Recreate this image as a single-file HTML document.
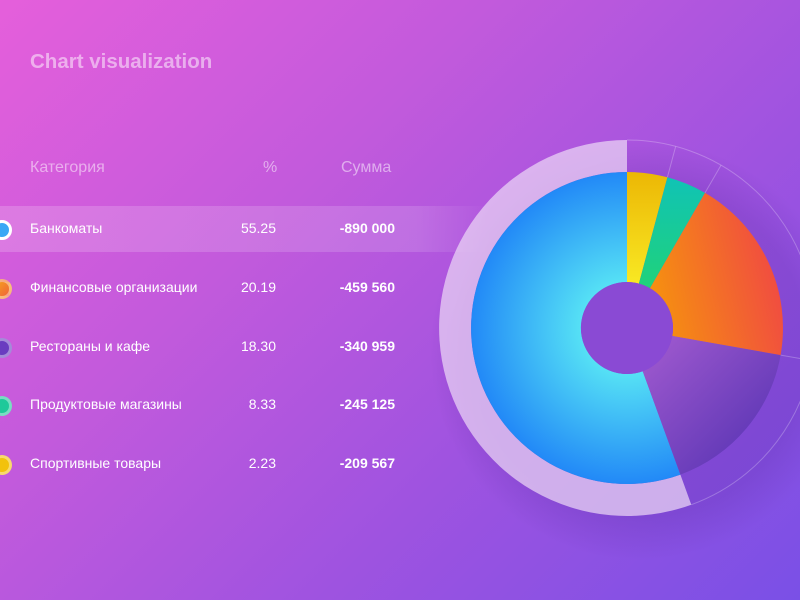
<!DOCTYPE html>
<html><head><meta charset="utf-8"><style>
html,body{margin:0;padding:0}
body{width:800px;height:600px;overflow:hidden;position:relative;font-family:"Liberation Sans",sans-serif;
background:linear-gradient(135deg,#e55fdb 0%,#c25adc 35%,#9f53e0 65%,#7a50e6 100%);}
.t{position:absolute;left:30px;top:50px;font-size:20.5px;font-weight:bold;color:rgba(255,255,255,0.5);}
.h{position:absolute;top:159px;font-size:16px;color:rgba(255,255,255,0.5)}
.hl{position:absolute;left:0;top:206px;width:490px;height:46px;background:linear-gradient(90deg,rgba(255,255,255,0.18),rgba(255,255,255,0.14) 85%,rgba(255,255,255,0))}
.r{position:absolute;left:0;width:400px;height:20px;font-size:14px;color:#fff}
.r span{position:absolute;top:0}
.n{left:30px}.p{right:124px}.s{right:5px;font-weight:bold}
.d{position:absolute;left:-8px;top:0px;width:14px;height:14px;border-radius:50%;border:3px solid rgba(255,255,255,0.4)}
</style></head><body>
<div class="t">Chart visualization</div>
<div class="h" style="left:30px">Категория</div>
<div class="h" style="left:263px">%</div>
<div class="h" style="left:341px">Сумма</div>
<div class="hl"></div>
<div class="r" style="top:220px"><div class="d" style="background:#3aa8f5;border-color:#fff"></div><span class="n">Банкоматы</span><span class="p">55.25</span><span class="s">-890 000</span></div>
<div class="r" style="top:279px"><div class="d" style="background:linear-gradient(135deg,#f6a21c,#f0643a)"></div><span class="n">Финансовые организации</span><span class="p">20.19</span><span class="s">-459 560</span></div>
<div class="r" style="top:338px"><div class="d" style="background:#6a3cc0"></div><span class="n">Рестораны и кафе</span><span class="p">18.30</span><span class="s">-340 959</span></div>
<div class="r" style="top:396px"><div class="d" style="background:#1ec99a"></div><span class="n">Продуктовые магазины</span><span class="p">8.33</span><span class="s">-245 125</span></div>
<div class="r" style="top:455px"><div class="d" style="background:#f2c20c"></div><span class="n">Спортивные товары</span><span class="p">2.23</span><span class="s">-209 567</span></div>
<svg width="800" height="600" style="position:absolute;left:0;top:0">
<defs>
<radialGradient id="bl" cx="627" cy="328" r="156" gradientUnits="userSpaceOnUse"><stop offset="0.3" stop-color="#55e0f5"/><stop offset="1" stop-color="#2289f7"/></radialGradient>
<linearGradient id="ye" x1="0" y1="0" x2="0" y2="1"><stop offset="0" stop-color="#ecb705"/><stop offset="1" stop-color="#f8e823"/></linearGradient>
<linearGradient id="gr" x1="0" y1="0" x2="0" y2="1"><stop offset="0" stop-color="#10c3b5"/><stop offset="1" stop-color="#20d27a"/></linearGradient>
<linearGradient id="or" x1="0" y1="0.6" x2="1" y2="0.3"><stop offset="0" stop-color="#f6910f"/><stop offset="1" stop-color="#f04546"/></linearGradient>
<linearGradient id="pu" x1="0" y1="0" x2="1" y2="1"><stop offset="0" stop-color="#a35bd0"/><stop offset="1" stop-color="#4e2fb0"/></linearGradient>
<radialGradient id="sh" cx="640" cy="350" r="210" gradientUnits="userSpaceOnUse"><stop offset="0.8" stop-color="#4a2090" stop-opacity="0.18"/><stop offset="1" stop-color="#4a2090" stop-opacity="0"/></radialGradient>
</defs>
<circle cx="640" cy="350" r="210" fill="url(#sh)"/>
<path d="M691.3 504.7 A188 188 0 1 1 627 140 L627 172 A156 156 0 1 0 680.4 474.6 Z" fill="rgba(235,215,245,0.72)"/>
<path d="M627 140 A188 188 0 0 1 691.3 504.7" fill="none" stroke="rgba(255,255,255,0.25)" stroke-width="1"/>
<path d="M667.4 177.3 L675.7 146.4 M705 192.9 L721 165.2 M780.6 355.1 L812.1 360.6" stroke="rgba(255,255,255,0.25)" stroke-width="1"/>
<path d="M680.4 474.6 A156 156 0 1 1 627 172 L627 282 A46 46 0 1 0 642.7 371.2 Z" fill="url(#bl)"/>
<path d="M627 172 A156 156 0 0 1 667.4 177.3 L638.9 283.6 A46 46 0 0 0 627 282 Z" fill="url(#ye)"/>
<path d="M667.4 177.3 A156 156 0 0 1 705 192.9 L650 288.2 A46 46 0 0 0 638.9 283.6 Z" fill="url(#gr)"/>
<path d="M705 192.9 A156 156 0 0 1 780.6 355.1 L672.3 336 A46 46 0 0 0 650 288.2 Z" fill="url(#or)"/>
<path d="M780.6 355.1 A156 156 0 0 1 680.4 474.6 L642.7 371.2 A46 46 0 0 0 672.3 336 Z" fill="url(#pu)"/>
<circle cx="627" cy="328" r="46" fill="#8a4ad4"/>
</svg>
</body></html>
